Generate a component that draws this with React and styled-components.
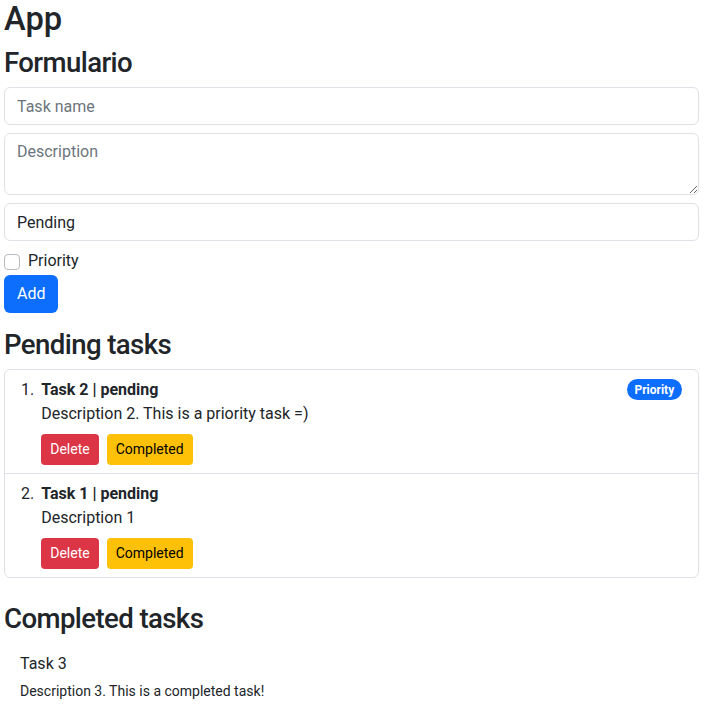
import React from 'react';
import styled, { createGlobalStyle } from 'styled-components';

const GlobalStyle = createGlobalStyle`
	body {
		margin: 0;
		font-family: Roboto, "Noto Sans", sans-serif;
		font-size: 16px;
		line-height: 1.5;
		color: #212529;
		background: #fff;
	}
	* { box-sizing: border-box; }
`;

const Page = styled.div`
	padding: 0 15px 0 4px;
`;

const Title = styled.h1`
	margin: 0 0 7px;
	font-size: 32.7px;
	font-weight: 500;
	line-height: 1.2;
`;

const Heading = styled.h2`
	margin: 0 0 8px;
	font-size: 27.6px;
	font-weight: 500;
	line-height: 1.2;
	letter-spacing: -0.6px;
`;

const Form = styled.form`
	display: flex;
	flex-direction: column;
	align-items: flex-start;
	margin-bottom: 15px;
`;

const Input = styled.input`
	display: block;
	width: 100%;
	height: 38px;
	margin-bottom: 8px;
	padding: 6px 12px;
	font: inherit;
	color: #212529;
	border: 1px solid #dee2e6;
	border-radius: 6px;
	outline: none;
	&::placeholder { color: #6c757d; }
`;

const TextArea = styled.textarea`
	display: block;
	width: 100%;
	height: 62px;
	margin: 0 0 8px;
	padding: 6px 12px;
	font: inherit;
	color: #212529;
	border: 1px solid #dee2e6;
	border-radius: 6px;
	outline: none;
	&::placeholder { color: #6c757d; }
`;

const Check = styled.label`
	display: flex;
	align-items: flex-start;
	gap: 8px;
	min-height: 24px;
	margin-bottom: 2px;
`;

const Box = styled.span`
	width: 16px;
	height: 16px;
	margin-top: 5px;
	border: 1px solid #b7bcc1;
	border-radius: 4px;
	background: #fff;
`;

const Button = styled.button`
	display: inline-block;
	padding: ${(p) => (p.small ? '4px 8px' : '6px 12px')};
	font-family: inherit;
	font-size: ${(p) => (p.small ? '14px' : '16px')};
	line-height: 1.5;
	color: ${(p) => (p.variant === 'warning' ? '#000' : '#fff')};
	background: ${(p) => ({ primary: '#0d6efd', danger: '#dc3545', warning: '#ffc107' }[p.variant])};
	border: 1px solid transparent;
	border-radius: ${(p) => (p.small ? '4px' : '6px')};
`;

const ListGroup = styled.ol`
	margin: 0 0 24px;
	padding: 0;
	list-style: none;
	border: 1px solid #dee2e6;
	border-radius: 6px;
	counter-reset: item;
`;

const Item = styled.li`
	display: flex;
	justify-content: space-between;
	align-items: flex-start;
	padding: 8px 16px;
	counter-increment: item;
	& + & { border-top: 1px solid #dee2e6; }
	&::before {
		content: counter(item) '.';
		min-width: 12px;
	}
`;

const ItemBody = styled.div`
	margin-left: 7px;
	margin-right: auto;
`;

const ItemTitle = styled.div`
	font-weight: 700;
`;

const Actions = styled.div`
	display: flex;
	gap: 8px;
	margin-top: 8px;
`;

const Badge = styled.span`
	margin-top: 1px;
	padding: 4.2px 7.8px;
	font-size: 12px;
	font-weight: 700;
	line-height: 1;
	color: #fff;
	background: #0d6efd;
	border-radius: 50rem;
`;

const DoneList = styled.ul`
	margin: 0;
	padding: 0;
	list-style: none;
`;

const DoneItem = styled.li`
	padding: 8px 16px;
`;

const DoneDesc = styled.small`
	display: block;
	margin-top: 5px;
	font-size: 14px;
`;

const pending = [
	{ id: 2, name: 'Task 2', description: 'Description 2. This is a priority task =)', priority: true },
	{ id: 1, name: 'Task 1', description: 'Description 1', priority: false }
];

const App = () => (
	<Page>
		<GlobalStyle />
		<Title>App</Title>
		<Heading>Formulario</Heading>
		<Form onSubmit={(e) => e.preventDefault()}>
			<Input type="text" placeholder="Task name" />
			<TextArea placeholder="Description" />
			<Input type="text" defaultValue="Pending" readOnly />
			<Check>
				<Box />
				Priority
			</Check>
			<Button variant="primary" type="submit">Add</Button>
		</Form>
		<Heading>Pending tasks</Heading>
		<ListGroup>
			{pending.map((t) => (
				<Item key={t.id}>
					<ItemBody>
						<ItemTitle>{t.name} | pending</ItemTitle>
						{t.description}
						<Actions>
							<Button small variant="danger">Delete</Button>
							<Button small variant="warning">Completed</Button>
						</Actions>
					</ItemBody>
					{t.priority && <Badge>Priority</Badge>}
				</Item>
			))}
		</ListGroup>
		<Heading>Completed tasks</Heading>
		<DoneList>
			<DoneItem>
				Task 3
				<DoneDesc>Description 3. This is a completed task!</DoneDesc>
			</DoneItem>
		</DoneList>
	</Page>
);

export default App;
